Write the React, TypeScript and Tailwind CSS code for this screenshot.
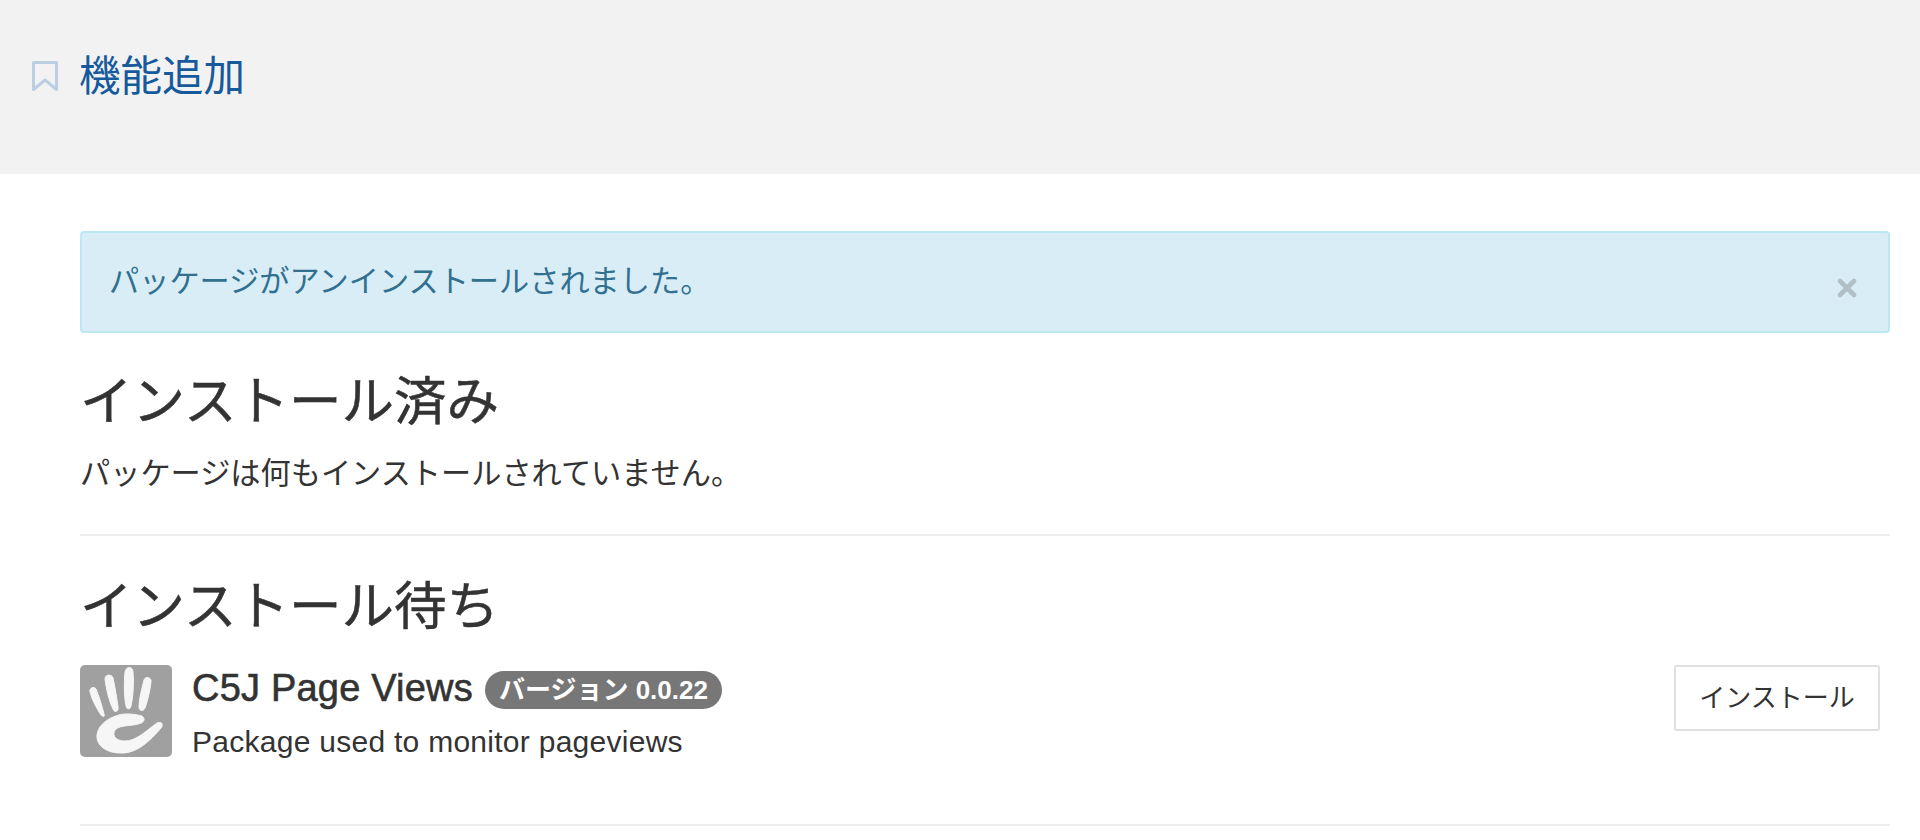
import React from 'react';
import { X } from 'lucide-react';

const HandLogo = () => (
  <svg viewBox="0 0 92 92" className="w-[92px] h-[92px] shrink-0">
    <rect width="92" height="92" rx="5" fill="#a0a0a0" />
    <g fill="#f6f6f6" stroke="#f6f6f6" strokeWidth="1" strokeLinejoin="round">
      <path d="M10 27c-1-4 4-6 6-3 3 7 6 17 8 25 1 3-1 3-3 1-4-6-9-15-11-23z" />
      <path d="M25 14c0-5 7-5 8-1 2 9 4 21 5 29 1 5-4 6-5 2-4-8-7-21-8-30z" />
      <path d="M45 7c1-6 8-6 8 0 1 11 0 26-2 34-1 4-4 4-5 0-2-9-2-24-1-34z" />
      <path d="M64 15c1-4 8-3 7 2-1 8-3 18-6 26-2 4-6 3-6-1 0-8 3-19 5-27z" />
      <path d="M62 51C54 49 46 48 39 50C28 53 18 60 17 70C16 80 26 89 44 88C58 87 70 76 81 63C84 59 81 56 77 58C68 64 56 77 44 76C35 76 31 69 36 64C41 60 52 61 58 59C64 58 66 54 62 51z" />
    </g>
  </svg>
);

export default function App() {
  return (
    <div className="min-h-[840px] bg-white text-[#333333] font-['Liberation_Sans','Noto_Sans_CJK_JP',sans-serif]">
      <header className="h-[174px] bg-[#f2f2f3] flex items-start pt-[51px] pl-[32px]">
        <svg viewBox="0 0 26 30" className="w-[26px] h-[30px] mt-[10px] mr-[21px]" fill="none" stroke="#bccfe2" strokeWidth="3" strokeLinejoin="round">
          <path d="M1.5 1.5h23v27L13 19 1.5 28.5z" />
        </svg>
        <h1 className="text-[41.5px] leading-[52px] text-[#175a9c]">機能追加</h1>
      </header>

      <main className="pl-[80px] pr-[30px] pt-[57px]">
        <div className="relative h-[102px] rounded-[4px] border-2 border-[#bce8f1] bg-[#d9edf7] text-[#31708f] pl-[27px] pt-[29px] text-[30.2px] leading-[40px]">
          パッケージがアンインストールされました。
          <X className="absolute right-[27px] top-[41px] w-[28px] h-[28px] text-[#b2bfc6]" strokeWidth={4} />
        </div>

        <h2 className="mt-[36px] text-[52.5px] leading-[66px] [-webkit-text-stroke:0.5px_#333333]">インストール済み</h2>
        <p className="mt-[19px] text-[30.2px] leading-[40px]">パッケージは何もインストールされていません。</p>
        <hr className="mt-[40px] border-t-2 border-[#eeeeee]" />

        <h2 className="mt-[38px] text-[52.5px] leading-[66px] [-webkit-text-stroke:0.5px_#333333]">インストール待ち</h2>
        <div className="mt-[25px] flex items-start">
          <HandLogo />
          <div className="ml-[20px] flex-1">
            <div className="flex items-center">
              <span className="text-[38px] leading-[46px] tracking-[0.2px] [-webkit-text-stroke:0.6px_#333333]">C5J Page Views</span>
              <span className="ml-[12px] mt-[4px] h-[38px] rounded-full bg-[#777777] px-[14px] text-white font-bold text-[26px] leading-[38px]">バージョン 0.0.22</span>
            </div>
            <p className="mt-[11px] text-[30px] leading-[40px] tracking-[0.27px]">Package used to monitor pageviews</p>
          </div>
          <button className="h-[66px] w-[206px] rounded-[3px] border-2 border-[#e0e0e0] bg-white text-[26px] mr-[10px]">インストール</button>
        </div>
        <hr className="mt-[62px] border-t-2 border-[#eeeeee]" />
      </main>
    </div>
  );
}
